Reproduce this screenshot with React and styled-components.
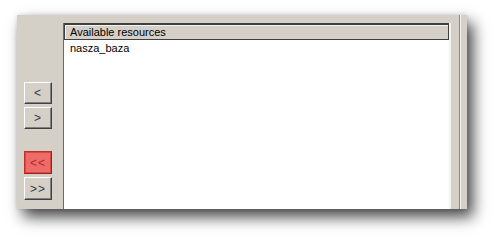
import React from "react";
import styled, { createGlobalStyle } from "styled-components";

const Global = createGlobalStyle`
  html, body { margin: 0; padding: 0; background: #ffffff; }
  body { font-family: "Liberation Sans", Arial, sans-serif; }
`;

const Page = styled.div`
  width: 503px;
  height: 244px;
  padding: 15px 0 0 17px;
  box-sizing: border-box;
  overflow: hidden;
`;

const Panel = styled.div`
  width: 450px;
  height: 194px;
  background: #d4d0c8;
  display: flex;
  box-shadow: 6px 8px 14px rgba(0, 0, 0, 0.72), 0 0 4px rgba(0, 0, 0, 0.12);
`;

const ButtonColumn = styled.div`
  width: 46px;
  display: flex;
  flex-direction: column;
  align-items: flex-start;
  padding: 67px 0 0 7px;
  box-sizing: border-box;
`;

const Group = styled.div`
  display: flex;
  flex-direction: column;
  gap: 3px;
  margin-bottom: ${(p) => p.$space || 0}px;
`;

const ArrowButton = styled.button`
  width: 28px;
  height: ${(p) => p.$h}px;
  padding: 0;
  margin: 0;
  font-family: "Liberation Sans", Arial, sans-serif;
  font-size: 12px;
  line-height: 1;
  letter-spacing: 1px;
  color: ${(p) => (p.$active ? "#b22a2a" : "#3a3a3a")};
  background: ${(p) => (p.$active ? "#ef6b68" : "#d4d0c8")};
  border: 1px solid;
  border-color: ${(p) =>
    p.$active
      ? "#c0302c #9a1e1c #9a1e1c #c0302c"
      : "#ffffff #404040 #404040 #ffffff"};
  box-shadow: ${(p) =>
    p.$active
      ? "inset 0 0 0 1px #d84a46"
      : "inset -1px -1px 0 #808080"};
  display: flex;
  align-items: center;
  justify-content: center;
`;

const ListBox = styled.div`
  width: 385px;
  margin-top: 8px;
  background: #ffffff;
  border-left: 1px solid #6a6a6a;
  border-right: 2px solid #f4f3f0;
  display: flex;
  flex-direction: column;
`;

const Header = styled.div`
  height: 17px;
  box-sizing: border-box;
  background: #d4d0c8;
  border: 1px solid #404040;
  border-top-width: 2px;
  box-shadow: inset 1px 1px 0 #f4f3ef;
  font-size: 11px;
  color: #000;
  padding-left: 5px;
  display: flex;
  align-items: center;
`;

const Item = styled.div`
  font-size: 11px;
  color: #000;
  padding: 2px 0 0 6px;
  height: 14px;
`;

const EdgeStrip = styled.div`
  flex: 1;
  display: flex;
  justify-content: flex-end;
  padding-right: 6px;
`;

const EdgeLine = styled.div`
  width: 1px;
  background: #8a8780;
  border-right: 1px solid #f6f5f2;
`;

export default function App() {
  return (
    <>
      <Global />
      <Page>
        <Panel>
          <ButtonColumn>
            <Group $space={22}>
              <ArrowButton $h={22}>&lt;</ArrowButton>
              <ArrowButton $h={22}>&gt;</ArrowButton>
            </Group>
            <Group>
              <ArrowButton $h={23} $active>&lt;&lt;</ArrowButton>
              <ArrowButton $h={23}>&gt;&gt;</ArrowButton>
            </Group>
          </ButtonColumn>
          <ListBox>
            <Header>Available resources</Header>
            <Item>nasza_baza</Item>
          </ListBox>
          <EdgeStrip>
            <EdgeLine />
          </EdgeStrip>
        </Panel>
      </Page>
    </>
  );
}
